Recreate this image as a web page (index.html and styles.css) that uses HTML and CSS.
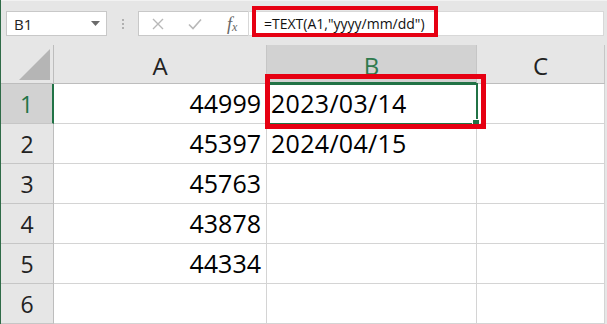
FILE: index.html
```html
<!DOCTYPE html>
<html>
<head>
<meta charset="utf-8">
<link rel="stylesheet" href="styles.css">
</head>
<body>
<div class="app">
  <div class="toolbar">
    <div class="namebox">
      <span class="name">B1</span>
      <svg class="caret" width="9" height="5" viewBox="0 0 9 5"><path d="M0 0H9L4.5 5Z" fill="#6b6b6b"/></svg>
    </div>
    <div class="grip"><span></span><span></span><span></span></div>
    <div class="buttons">
      <svg class="icon" width="12" height="12" viewBox="0 0 12 12"><path d="M1 1L11 11M11 1L1 11" stroke="#b8b8b8" stroke-width="1.4"/></svg>
      <svg class="icon" width="14" height="12" viewBox="0 0 14 12"><path d="M1 6.5L5 10.5L13 1.5" stroke="#b8b8b8" stroke-width="1.6" fill="none"/></svg>
      <span class="fx">f<sub>x</sub></span>
    </div>
    <div class="formula">=TEXT(A1,"yyyy/mm/dd")</div>
    <div class="mark mark-formula"></div>
  </div>
  <div class="sheet">
    <div class="corner"><div class="tri"></div></div>
    <div class="colhdr">A</div>
    <div class="colhdr sel">B</div>
    <div class="colhdr">C</div>

    <div class="rowhdr sel">1</div>
    <div class="cell num">44999</div>
    <div class="cell active">2023/03/14<span class="handle"></span></div>
    <div class="cell"></div>

    <div class="rowhdr">2</div>
    <div class="cell num">45397</div>
    <div class="cell">2024/04/15</div>
    <div class="cell"></div>

    <div class="rowhdr">3</div>
    <div class="cell num">45763</div>
    <div class="cell"></div>
    <div class="cell"></div>

    <div class="rowhdr">4</div>
    <div class="cell num">43878</div>
    <div class="cell"></div>
    <div class="cell"></div>

    <div class="rowhdr">5</div>
    <div class="cell num">44334</div>
    <div class="cell"></div>
    <div class="cell"></div>

    <div class="rowhdr">6</div>
    <div class="cell"></div>
    <div class="cell"></div>
    <div class="cell"></div>

    <div class="mark mark-cell"></div>
  </div>
</div>
</body>
</html>
```

FILE: styles.css
```css
html, body {
  margin: 0;
  padding: 0;
}
body {
  width: 607px;
  height: 324px;
  overflow: hidden;
  background: #e6e6e6;
  font-family: "Open Sans", "Noto Sans", sans-serif;
}
.app {
  position: relative;
  height: 324px;
  border-left: 1px solid #2f6b47;
  background: #e6e6e6;
}
.toolbar {
  position: relative;
  height: 45px;
  display: flex;
  align-items: flex-start;
  padding-top: 10px;
  box-sizing: border-box;
  border-top: 1px solid #f2f2f2;
}
.namebox {
  margin-left: 5px;
  width: 101px;
  height: 25px;
  box-sizing: border-box;
  background: #fff;
  border: 1px solid #c8c8c8;
  display: flex;
  align-items: center;
  justify-content: space-between;
  padding: 0 6px 0 7px;
}
.name {
  font-size: 15px;
  color: #222;
}
.caret {
  display: block;
}
.grip {
  width: 31px;
  height: 25px;
  display: flex;
  flex-direction: column;
  align-items: center;
  justify-content: center;
  gap: 2px;
}
.grip span {
  width: 2px;
  height: 2px;
  background: #b0b0b0;
}
.buttons {
  width: 110px;
  height: 25px;
  box-sizing: border-box;
  background: #fff;
  border: 1px solid #c8c8c8;
  border-right: none;
  display: flex;
  align-items: center;
  padding-left: 13px;
  gap: 24px;
}
.icon {
  display: block;
}
.fx {
  font-family: "Liberation Serif", serif;
  font-style: italic;
  font-size: 18px;
  color: #666;
  margin-left: 1px;
  line-height: 1;
}
.fx sub {
  font-size: 12px;
  vertical-align: -1px;
}
.formula {
  width: 356px;
  height: 25px;
  box-sizing: border-box;
  background: #fff;
  border: 1px solid #d8d8d8;
  font-size: 14px;
  color: #111;
  line-height: 23px;
  padding-left: 15px;
}
.mark {
  position: absolute;
  border: 4px solid #e60012;
  box-sizing: border-box;
  pointer-events: none;
}
.mark-formula {
  left: 251px;
  top: 5px;
  width: 186px;
  height: 31px;
}
.sheet {
  position: relative;
  display: grid;
  grid-template-columns: 53px 213px 210px 128px;
  grid-template-rows: 39px repeat(6, 40px);
}
.corner, .colhdr, .rowhdr, .cell {
  box-sizing: border-box;
  border-right: 1px solid #d4d4d4;
  border-bottom: 1px solid #d4d4d4;
}
.corner {
  background: #e6e6e6;
  border-right: 1px solid #bdbdbd;
  border-bottom: 1px solid #bdbdbd;
  display: flex;
  align-items: flex-end;
  justify-content: flex-end;
  padding: 0 3px 3px 0;
}
.tri {
  width: 31px;
  height: 31px;
  background: #b5b5b5;
  clip-path: polygon(100% 0, 100% 100%, 0 100%);
}
.colhdr {
  background: #e6e6e6;
  border-right-color: #c6c6c6;
  border-bottom-color: #bdbdbd;
  font-size: 24px;
  color: #222;
  display: flex;
  align-items: center;
  justify-content: center;
  padding-top: 3px;
}
.colhdr.sel {
  background: #d2d2d2;
  color: #2e7a4d;
  border-bottom: 2px solid #217346;
  padding-top: 4px;
}
.rowhdr {
  background: #e6e6e6;
  border-right-color: #bdbdbd;
  border-bottom-color: #c6c6c6;
  font-size: 23px;
  color: #222;
  display: flex;
  align-items: center;
  justify-content: center;
}
.rowhdr.sel {
  background: #d2d2d2;
  color: #217346;
  border-right: 2px solid #217346;
}
.cell {
  background: #fff;
  font-size: 25px;
  color: #000;
  display: flex;
  align-items: center;
  padding: 0 5px 2px 4px;
  letter-spacing: 0.3px;
}
.cell.num {
  justify-content: flex-end;
  letter-spacing: 0;
}
.cell.active {
  position: relative;
  outline: 2px solid #217346;
  outline-offset: -1px;
}
.handle {
  position: absolute;
  right: -4px;
  bottom: -4px;
  width: 6px;
  height: 6px;
  background: #217346;
  border: 1px solid #fff;
}
.mark-cell {
  left: 264px;
  top: 29px;
  width: 221px;
  height: 55px;
  border-width: 5px;
}
```
